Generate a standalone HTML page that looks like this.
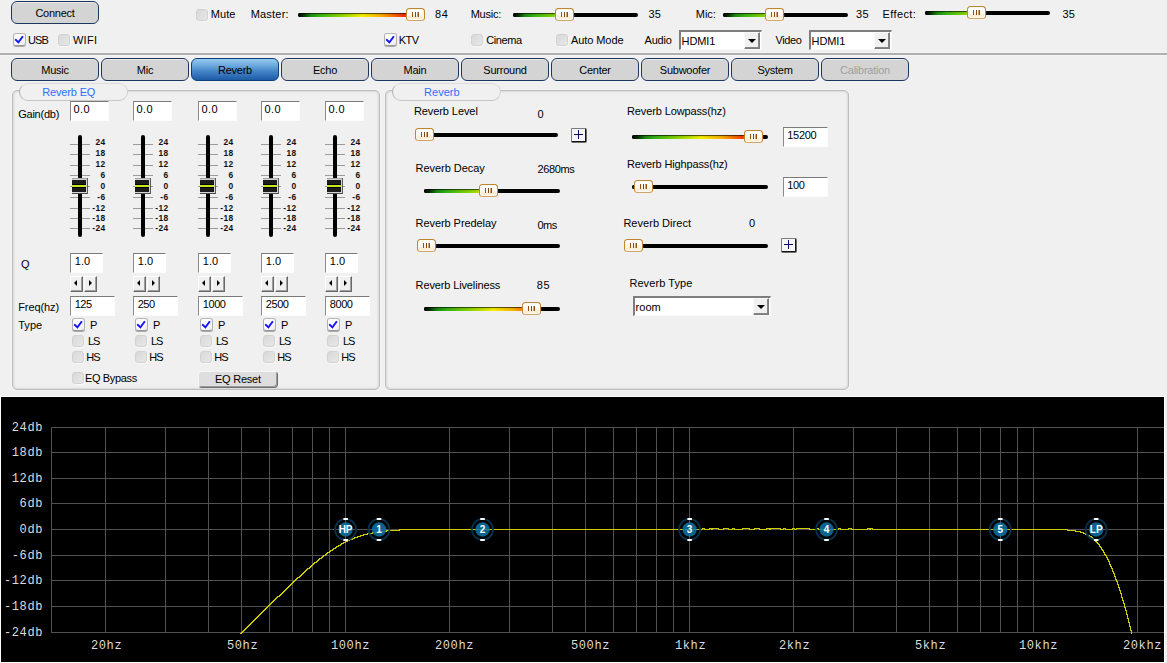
<!DOCTYPE html><html><head><meta charset="utf-8"><title>Reverb</title><style>
html,body{margin:0;padding:0;}
body{width:1167px;height:663px;overflow:hidden;background:#f0f0f0;position:relative;font-family:"Liberation Sans",sans-serif;font-size:11px;color:#000;}
.a{position:absolute;}
.t{position:absolute;white-space:nowrap;line-height:13px;height:13px;}
.btn{position:absolute;box-sizing:border-box;border:1px solid #1c3660;border-radius:6px;background:#d4d4d4;text-align:center;line-height:21px;padding-top:1px;height:23px;width:88px;letter-spacing:-.25px;box-shadow:inset 0 1px 0 #ebebeb,0 0 1px #fff;}
.btn.sel{background:linear-gradient(#94caef 0%,#6eaade 30%,#4283c6 60%,#1d5ba7 100%);border-color:#0e3f7c;box-shadow:0 0 1px #fff;}
.btn.dis{color:#a0a0a0;}
.cb{position:absolute;box-sizing:border-box;width:12px;height:12px;border:1px solid #d2d2d2;border-radius:3px;background:linear-gradient(135deg,#d9d9d9,#e7e7e7);box-shadow:1px 1px 0 #f8f8f8;}
.cb.on{width:13px;height:13px;border-color:#b4b4b4 #b0b0b0 #989898 #b0b0b0;background:linear-gradient(135deg,#ffffff 30%,#ececec);box-shadow:0 1px 0 #a8a8a8;}
.cb svg{position:absolute;left:0;top:0;}
.inp{position:absolute;box-sizing:border-box;background:#fff;border-top:1px solid #7a7a7a;border-left:1px solid #8a8a8a;border-right:1px solid #fdfdfd;border-bottom:1px solid #fdfdfd;line-height:15px;padding-left:4px;}
.sel2{position:absolute;box-sizing:border-box;background:#fff;border-style:solid;border-width:2px 1px 1px 2px;border-color:#7e7e7e #f8f8f8 #f8f8f8 #7e7e7e;line-height:19px;padding-left:1.5px;}
.sel2 i{position:absolute;right:1px;top:0;bottom:0;width:16px;box-sizing:border-box;background:#f0f0f0;border:1px solid;border-color:#fafafa #7c7c7c #7c7c7c #fafafa;box-shadow:inset -1px -1px 0 #868686;}

.sel2 i:after{content:"";position:absolute;left:3px;top:6px;border:4px solid transparent;border-top:4px solid #000;border-bottom:none;}
.trk{position:absolute;height:4px;border-radius:2px;background:#000;}
.hnd{position:absolute;box-sizing:border-box;width:19px;height:13px;border:1px solid #bf8430;border-bottom-color:#d2a566;border-radius:3.5px;background:linear-gradient(#ffffff 30%,#fbecd2 75%,#fdf3e2);box-shadow:inset 0 0 0 1px #fffaf2,0 0 1px #fafafa;}
.hnd:before{content:"";position:absolute;left:5px;top:3px;width:1.3px;height:5px;background:#96500f;box-shadow:3px 0 0 #8a440c,5.5px 0 0 #96500f,6px 0 0 #96500f;}
.grp{position:absolute;box-sizing:border-box;border:1px solid #bdbdbd;border-radius:5px;box-shadow:inset 0 0 3px rgba(0,0,0,.2),0 0 0 1px #f4f4f4;}
.pill{position:absolute;box-sizing:border-box;height:18px;border:1px solid;border-color:#dcdcdc #d4d4d4 #c6c6c6 #b4b4b4;border-radius:9px;background:#f0f0f0;}
.plus{position:absolute;box-sizing:border-box;width:15px;height:14px;background:#f6f6f9;border:1px solid;border-color:#7c7c7c #141414 #141414 #7c7c7c;border-radius:1.5px;box-shadow:.5px .5px 0 .5px rgba(0,0,0,.55);}
.plus:before{content:"";position:absolute;left:2px;top:5px;width:9px;height:1px;background:#0a0a64;}
.plus:after{content:"";position:absolute;left:6px;top:1px;width:1px;height:9px;background:#0a0a64;}
.sp{position:absolute;box-sizing:border-box;width:13px;height:16px;background:#f0f0f0;border:1px solid;border-color:#fff #696969 #696969 #fff;box-shadow:inset -1px -1px 0 #a0a0a0;}
.sp:after{content:"";position:absolute;top:3px;border:3px solid transparent;}
.sp.l:after{left:1px;border-right:3px solid #000;border-left:none;left:3px;}
.sp.r:after{left:4px;border-left:3px solid #000;border-right:none;}
.tick{position:absolute;height:1px;background:#9a9a9a;width:20px;}
.tl{position:absolute;font-size:8.4px;font-weight:bold;letter-spacing:.4px;line-height:10px;width:24.5px;text-align:right;color:#111;}
.vtrk{position:absolute;width:4px;border-radius:2px;background:#000;}
.vh{position:absolute;width:16px;height:16px;background:linear-gradient(to bottom,#a4a4a4 0,#a4a4a4 1px,#d4d4d4 1px,#d4d4d4 2px,#1c1c1c 2px,#1c1c1c 6px,#04040f 6px,#04040f 7px,#c4e81c 7px,#c4e81c 9px,#04040f 9px,#04040f 10px,#1c1c1c 10px,#1c1c1c 14px,#d4d4d4 14px,#d4d4d4 15px,#4a4a4a 15px,#4a4a4a 16px);}
.vh:before{content:"";position:absolute;left:14px;top:1px;width:1px;height:14px;background:#d4d4d4;}
.vh:after{content:"";position:absolute;left:15px;top:0;width:1px;height:16px;background:#5a5a5a;}
.rbtn{position:absolute;box-sizing:border-box;border:1px solid;border-color:#f6f6f6 #6e6e6e #6e6e6e #f6f6f6;border-radius:4px;background:#dedede;box-shadow:inset -1px -1px 0 #9c9c9c;}
</style></head><body>
<div class="btn" style="left:11px;top:1px">Connect</div>
<div class="cb on" style="left:13px;top:33px"><svg width="11" height="11" viewBox="0 0 11 11"><path d="M1.2 5.3 L4.4 8.4 L8.9 2.2" fill="none" stroke="#1414f4" stroke-width="1.9"/></svg></div>
<div class="t" style="left:28.1px;top:33.7px;letter-spacing:-0.97px;">USB</div>
<div class="cb" style="left:58px;top:34px"></div>
<div class="t" style="left:72.9px;top:33.7px;letter-spacing:0.35px;">WIFI</div>
<div class="cb" style="left:196px;top:9px"></div>
<div class="t" style="left:210.7px;top:7.7px;letter-spacing:0.11px;">Mute</div>
<div class="t" style="left:250.7px;top:7.7px;letter-spacing:0.20px;">Master:</div>
<div class="trk" style="left:298px;top:13px;width:126px;"></div>
<div class="trk" style="left:298px;top:13px;width:117px;background:linear-gradient(rgba(0,0,0,.62) 0,rgba(0,0,0,.62) 1px,rgba(0,0,0,.12) 1px,rgba(0,0,0,0) 3px),linear-gradient(90deg,#000 0%,#062c04 4%,#1c8c10 10%,#34b414 17%,#86d400 33%,#f6f200 51%,#fbb000 66%,#f85000 79%,#f00800 90%,#f00000 100%);background-size:126px 4px,126px 4px;border-radius:2px 0 0 2px"></div>
<div class="hnd" style="left:406px;top:8px"></div>
<div class="t" style="left:435.1px;top:7.7px;letter-spacing:0.58px;">84</div>
<div class="t" style="left:470.7px;top:7.7px;letter-spacing:-0.25px;">Music:</div>
<div class="trk" style="left:513px;top:13px;width:125px;"></div>
<div class="trk" style="left:513px;top:13px;width:51px;background:linear-gradient(rgba(0,0,0,.62) 0,rgba(0,0,0,.62) 1px,rgba(0,0,0,.12) 1px,rgba(0,0,0,0) 3px),linear-gradient(90deg,#000 0%,#062c04 4%,#1c8c10 10%,#34b414 17%,#86d400 33%,#f6f200 51%,#fbb000 66%,#f85000 79%,#f00800 90%,#f00000 100%);background-size:125px 4px,125px 4px;border-radius:2px 0 0 2px"></div>
<div class="hnd" style="left:555px;top:8px"></div>
<div class="t" style="left:648.4px;top:7.7px;letter-spacing:0.13px;">35</div>
<div class="t" style="left:695.8px;top:7.7px;letter-spacing:-0.07px;">Mic:</div>
<div class="trk" style="left:723px;top:13px;width:125px;"></div>
<div class="trk" style="left:723px;top:13px;width:51px;background:linear-gradient(rgba(0,0,0,.62) 0,rgba(0,0,0,.62) 1px,rgba(0,0,0,.12) 1px,rgba(0,0,0,0) 3px),linear-gradient(90deg,#000 0%,#062c04 4%,#1c8c10 10%,#34b414 17%,#86d400 33%,#f6f200 51%,#fbb000 66%,#f85000 79%,#f00800 90%,#f00000 100%);background-size:125px 4px,125px 4px;border-radius:2px 0 0 2px"></div>
<div class="hnd" style="left:765px;top:8px"></div>
<div class="t" style="left:856.0px;top:7.7px;letter-spacing:0.28px;">35</div>
<div class="t" style="left:882.6px;top:7.7px;letter-spacing:0.36px;">Effect:</div>
<div class="trk" style="left:925px;top:11px;width:125px;"></div>
<div class="trk" style="left:925px;top:11px;width:51px;background:linear-gradient(rgba(0,0,0,.62) 0,rgba(0,0,0,.62) 1px,rgba(0,0,0,.12) 1px,rgba(0,0,0,0) 3px),linear-gradient(90deg,#000 0%,#062c04 4%,#1c8c10 10%,#34b414 17%,#86d400 33%,#f6f200 51%,#fbb000 66%,#f85000 79%,#f00800 90%,#f00000 100%);background-size:125px 4px,125px 4px;border-radius:2px 0 0 2px"></div>
<div class="hnd" style="left:967px;top:6px"></div>
<div class="t" style="left:1062.6px;top:7.7px;letter-spacing:0.08px;">35</div>
<div class="cb on" style="left:384px;top:33px"><svg width="11" height="11" viewBox="0 0 11 11"><path d="M1.2 5.3 L4.4 8.4 L8.9 2.2" fill="none" stroke="#1414f4" stroke-width="1.9"/></svg></div>
<div class="t" style="left:398.8px;top:33.7px;letter-spacing:-0.60px;">KTV</div>
<div class="cb" style="left:471px;top:34px"></div>
<div class="t" style="left:486.2px;top:33.7px;letter-spacing:-0.38px;">Cinema</div>
<div class="cb" style="left:556px;top:34px"></div>
<div class="t" style="left:571.0px;top:33.7px;letter-spacing:-0.08px;">Auto Mode</div>
<div class="t" style="left:644.5px;top:33.7px;letter-spacing:-0.21px;">Audio</div>
<div class="sel2" style="left:679px;top:30px;width:83px;height:20px"><i></i></div>
<div class="t" style="left:681.6px;top:34.7px;letter-spacing:-0.13px;">HDMI1</div>
<div class="t" style="left:775.4px;top:33.7px;letter-spacing:-0.37px;">Video</div>
<div class="sel2" style="left:809px;top:30px;width:83px;height:20px"><i></i></div>
<div class="t" style="left:811.6px;top:34.7px;letter-spacing:-0.13px;">HDMI1</div>
<div class="a" style="left:0;top:53px;width:1167px;height:2px;background:#b0b0b0"></div>
<div class="a" style="left:0;top:52px;width:1167px;height:1px;background:#f4f4f4"></div>
<div class="a" style="left:0;top:55px;width:1167px;height:1px;background:#f5f5f5"></div>
<div class="btn" style="left:11px;top:58px">Music</div>
<div class="btn" style="left:101px;top:58px">Mic</div>
<div class="btn sel" style="left:191px;top:58px">Reverb</div>
<div class="btn" style="left:281px;top:58px">Echo</div>
<div class="btn" style="left:371px;top:58px">Main</div>
<div class="btn" style="left:461px;top:58px">Surround</div>
<div class="btn" style="left:551px;top:58px">Center</div>
<div class="btn" style="left:641px;top:58px">Subwoofer</div>
<div class="btn" style="left:731px;top:58px">System</div>
<div class="btn dis" style="left:821px;top:58px">Calibration</div>
<div class="grp" style="left:12px;top:90px;width:368px;height:300px"></div>
<div class="pill" style="left:19px;top:83px;width:109px"></div>
<div class="t" style="left:42.2px;top:85.7px;letter-spacing:-0.15px;color:#2f6fff;">Reverb EQ</div>
<div class="grp" style="left:385px;top:90px;width:464px;height:300px"></div>
<div class="pill" style="left:392px;top:83px;width:109px"></div>
<div class="t" style="left:424.1px;top:85.7px;letter-spacing:0.02px;color:#2f6fff;">Reverb</div>
<div class="t" style="left:18.2px;top:107.7px;letter-spacing:-0.24px;">Gain(db)</div>
<div class="t" style="left:21.1px;top:257.7px;letter-spacing:0.24px;">Q</div>
<div class="t" style="left:18.2px;top:300.7px;letter-spacing:-0.08px;">Freq(hz)</div>
<div class="t" style="left:18.2px;top:318.7px;letter-spacing:0.04px;">Type</div>
<div class="inp" style="left:70px;top:101px;width:39px;height:20px;"></div>
<div class="t" style="left:73.4px;top:102.7px;letter-spacing:0.50px;">0.0</div>
<div class="tick" style="left:70px;top:144px"></div>
<div class="tl" style="left:81px;top:137px">24</div>
<div class="tick" style="left:70px;top:154px"></div>
<div class="tl" style="left:81px;top:148px">18</div>
<div class="tick" style="left:70px;top:165px"></div>
<div class="tl" style="left:81px;top:159px">12</div>
<div class="tick" style="left:70px;top:175px"></div>
<div class="tl" style="left:81px;top:170px">6</div>
<div class="tick" style="left:70px;top:186px"></div>
<div class="tl" style="left:81px;top:181px">0</div>
<div class="tick" style="left:70px;top:197px"></div>
<div class="tl" style="left:81px;top:192px">-6</div>
<div class="tick" style="left:70px;top:208px"></div>
<div class="tl" style="left:81px;top:203px">-12</div>
<div class="tick" style="left:70px;top:218px"></div>
<div class="tl" style="left:81px;top:213px">-18</div>
<div class="tick" style="left:70px;top:228px"></div>
<div class="tl" style="left:81px;top:223px">-24</div>
<div class="vtrk" style="left:78px;top:135px;height:102px"></div>
<div class="vh" style="left:72px;top:178px"></div>
<div class="inp" style="left:70px;top:253px;width:33px;height:20px;"></div>
<div class="t" style="left:74.7px;top:254.7px;letter-spacing:0.07px;">1.0</div>
<div class="sp l" style="left:70px;top:276px"></div><div class="sp r" style="left:84px;top:276px"></div>
<div class="inp" style="left:70px;top:296px;width:45px;height:20px;"></div>
<div class="t" style="left:74.7px;top:297.7px;letter-spacing:-0.45px;">125</div>
<div class="cb on" style="left:72px;top:318px"><svg width="11" height="11" viewBox="0 0 11 11"><path d="M1.2 5.3 L4.4 8.4 L8.9 2.2" fill="none" stroke="#1414f4" stroke-width="1.9"/></svg></div>
<div class="t" style="left:89.9px;top:318.7px;letter-spacing:-0.74px;">P</div>
<div class="cb" style="left:72px;top:335px"></div>
<div class="t" style="left:87.9px;top:334.7px;letter-spacing:-0.98px;">LS</div>
<div class="cb" style="left:72px;top:351px"></div>
<div class="t" style="left:86.3px;top:350.7px;letter-spacing:-1.09px;">HS</div>
<div class="inp" style="left:133px;top:101px;width:39px;height:20px;"></div>
<div class="t" style="left:136.4px;top:102.7px;letter-spacing:0.50px;">0.0</div>
<div class="tick" style="left:133px;top:144px"></div>
<div class="tl" style="left:144px;top:137px">24</div>
<div class="tick" style="left:133px;top:154px"></div>
<div class="tl" style="left:144px;top:148px">18</div>
<div class="tick" style="left:133px;top:165px"></div>
<div class="tl" style="left:144px;top:159px">12</div>
<div class="tick" style="left:133px;top:175px"></div>
<div class="tl" style="left:144px;top:170px">6</div>
<div class="tick" style="left:133px;top:186px"></div>
<div class="tl" style="left:144px;top:181px">0</div>
<div class="tick" style="left:133px;top:197px"></div>
<div class="tl" style="left:144px;top:192px">-6</div>
<div class="tick" style="left:133px;top:208px"></div>
<div class="tl" style="left:144px;top:203px">-12</div>
<div class="tick" style="left:133px;top:218px"></div>
<div class="tl" style="left:144px;top:213px">-18</div>
<div class="tick" style="left:133px;top:228px"></div>
<div class="tl" style="left:144px;top:223px">-24</div>
<div class="vtrk" style="left:141px;top:135px;height:102px"></div>
<div class="vh" style="left:135px;top:178px"></div>
<div class="inp" style="left:133px;top:253px;width:33px;height:20px;"></div>
<div class="t" style="left:137.7px;top:254.7px;letter-spacing:0.07px;">1.0</div>
<div class="sp l" style="left:133px;top:276px"></div><div class="sp r" style="left:147px;top:276px"></div>
<div class="inp" style="left:133px;top:296px;width:45px;height:20px;"></div>
<div class="t" style="left:137.7px;top:297.7px;letter-spacing:-0.45px;">250</div>
<div class="cb on" style="left:135px;top:318px"><svg width="11" height="11" viewBox="0 0 11 11"><path d="M1.2 5.3 L4.4 8.4 L8.9 2.2" fill="none" stroke="#1414f4" stroke-width="1.9"/></svg></div>
<div class="t" style="left:152.9px;top:318.7px;letter-spacing:-0.74px;">P</div>
<div class="cb" style="left:135px;top:335px"></div>
<div class="t" style="left:150.9px;top:334.7px;letter-spacing:-0.98px;">LS</div>
<div class="cb" style="left:135px;top:351px"></div>
<div class="t" style="left:149.3px;top:350.7px;letter-spacing:-1.09px;">HS</div>
<div class="inp" style="left:198px;top:101px;width:39px;height:20px;"></div>
<div class="t" style="left:201.4px;top:102.7px;letter-spacing:0.50px;">0.0</div>
<div class="tick" style="left:198px;top:144px"></div>
<div class="tl" style="left:209px;top:137px">24</div>
<div class="tick" style="left:198px;top:154px"></div>
<div class="tl" style="left:209px;top:148px">18</div>
<div class="tick" style="left:198px;top:165px"></div>
<div class="tl" style="left:209px;top:159px">12</div>
<div class="tick" style="left:198px;top:175px"></div>
<div class="tl" style="left:209px;top:170px">6</div>
<div class="tick" style="left:198px;top:186px"></div>
<div class="tl" style="left:209px;top:181px">0</div>
<div class="tick" style="left:198px;top:197px"></div>
<div class="tl" style="left:209px;top:192px">-6</div>
<div class="tick" style="left:198px;top:208px"></div>
<div class="tl" style="left:209px;top:203px">-12</div>
<div class="tick" style="left:198px;top:218px"></div>
<div class="tl" style="left:209px;top:213px">-18</div>
<div class="tick" style="left:198px;top:228px"></div>
<div class="tl" style="left:209px;top:223px">-24</div>
<div class="vtrk" style="left:206px;top:135px;height:102px"></div>
<div class="vh" style="left:200px;top:178px"></div>
<div class="inp" style="left:198px;top:253px;width:33px;height:20px;"></div>
<div class="t" style="left:202.7px;top:254.7px;letter-spacing:0.07px;">1.0</div>
<div class="sp l" style="left:198px;top:276px"></div><div class="sp r" style="left:212px;top:276px"></div>
<div class="inp" style="left:198px;top:296px;width:45px;height:20px;"></div>
<div class="t" style="left:202.7px;top:297.7px;letter-spacing:-0.39px;">1000</div>
<div class="cb on" style="left:200px;top:318px"><svg width="11" height="11" viewBox="0 0 11 11"><path d="M1.2 5.3 L4.4 8.4 L8.9 2.2" fill="none" stroke="#1414f4" stroke-width="1.9"/></svg></div>
<div class="t" style="left:217.9px;top:318.7px;letter-spacing:-0.74px;">P</div>
<div class="cb" style="left:200px;top:335px"></div>
<div class="t" style="left:215.9px;top:334.7px;letter-spacing:-0.98px;">LS</div>
<div class="cb" style="left:200px;top:351px"></div>
<div class="t" style="left:214.3px;top:350.7px;letter-spacing:-1.09px;">HS</div>
<div class="inp" style="left:261px;top:101px;width:39px;height:20px;"></div>
<div class="t" style="left:264.4px;top:102.7px;letter-spacing:0.50px;">0.0</div>
<div class="tick" style="left:261px;top:144px"></div>
<div class="tl" style="left:272px;top:137px">24</div>
<div class="tick" style="left:261px;top:154px"></div>
<div class="tl" style="left:272px;top:148px">18</div>
<div class="tick" style="left:261px;top:165px"></div>
<div class="tl" style="left:272px;top:159px">12</div>
<div class="tick" style="left:261px;top:175px"></div>
<div class="tl" style="left:272px;top:170px">6</div>
<div class="tick" style="left:261px;top:186px"></div>
<div class="tl" style="left:272px;top:181px">0</div>
<div class="tick" style="left:261px;top:197px"></div>
<div class="tl" style="left:272px;top:192px">-6</div>
<div class="tick" style="left:261px;top:208px"></div>
<div class="tl" style="left:272px;top:203px">-12</div>
<div class="tick" style="left:261px;top:218px"></div>
<div class="tl" style="left:272px;top:213px">-18</div>
<div class="tick" style="left:261px;top:228px"></div>
<div class="tl" style="left:272px;top:223px">-24</div>
<div class="vtrk" style="left:269px;top:135px;height:102px"></div>
<div class="vh" style="left:263px;top:178px"></div>
<div class="inp" style="left:261px;top:253px;width:33px;height:20px;"></div>
<div class="t" style="left:265.7px;top:254.7px;letter-spacing:0.07px;">1.0</div>
<div class="sp l" style="left:261px;top:276px"></div><div class="sp r" style="left:275px;top:276px"></div>
<div class="inp" style="left:261px;top:296px;width:45px;height:20px;"></div>
<div class="t" style="left:265.7px;top:297.7px;letter-spacing:-0.39px;">2500</div>
<div class="cb on" style="left:263px;top:318px"><svg width="11" height="11" viewBox="0 0 11 11"><path d="M1.2 5.3 L4.4 8.4 L8.9 2.2" fill="none" stroke="#1414f4" stroke-width="1.9"/></svg></div>
<div class="t" style="left:280.9px;top:318.7px;letter-spacing:-0.74px;">P</div>
<div class="cb" style="left:263px;top:335px"></div>
<div class="t" style="left:278.9px;top:334.7px;letter-spacing:-0.98px;">LS</div>
<div class="cb" style="left:263px;top:351px"></div>
<div class="t" style="left:277.3px;top:350.7px;letter-spacing:-1.09px;">HS</div>
<div class="inp" style="left:325px;top:101px;width:39px;height:20px;"></div>
<div class="t" style="left:328.4px;top:102.7px;letter-spacing:0.50px;">0.0</div>
<div class="tick" style="left:325px;top:144px"></div>
<div class="tl" style="left:336px;top:137px">24</div>
<div class="tick" style="left:325px;top:154px"></div>
<div class="tl" style="left:336px;top:148px">18</div>
<div class="tick" style="left:325px;top:165px"></div>
<div class="tl" style="left:336px;top:159px">12</div>
<div class="tick" style="left:325px;top:175px"></div>
<div class="tl" style="left:336px;top:170px">6</div>
<div class="tick" style="left:325px;top:186px"></div>
<div class="tl" style="left:336px;top:181px">0</div>
<div class="tick" style="left:325px;top:197px"></div>
<div class="tl" style="left:336px;top:192px">-6</div>
<div class="tick" style="left:325px;top:208px"></div>
<div class="tl" style="left:336px;top:203px">-12</div>
<div class="tick" style="left:325px;top:218px"></div>
<div class="tl" style="left:336px;top:213px">-18</div>
<div class="tick" style="left:325px;top:228px"></div>
<div class="tl" style="left:336px;top:223px">-24</div>
<div class="vtrk" style="left:333px;top:135px;height:102px"></div>
<div class="vh" style="left:327px;top:178px"></div>
<div class="inp" style="left:325px;top:253px;width:33px;height:20px;"></div>
<div class="t" style="left:329.7px;top:254.7px;letter-spacing:0.07px;">1.0</div>
<div class="sp l" style="left:325px;top:276px"></div><div class="sp r" style="left:339px;top:276px"></div>
<div class="inp" style="left:325px;top:296px;width:45px;height:20px;"></div>
<div class="t" style="left:329.7px;top:297.7px;letter-spacing:-0.39px;">8000</div>
<div class="cb on" style="left:327px;top:318px"><svg width="11" height="11" viewBox="0 0 11 11"><path d="M1.2 5.3 L4.4 8.4 L8.9 2.2" fill="none" stroke="#1414f4" stroke-width="1.9"/></svg></div>
<div class="t" style="left:344.9px;top:318.7px;letter-spacing:-0.74px;">P</div>
<div class="cb" style="left:327px;top:335px"></div>
<div class="t" style="left:342.9px;top:334.7px;letter-spacing:-0.98px;">LS</div>
<div class="cb" style="left:327px;top:351px"></div>
<div class="t" style="left:341.3px;top:350.7px;letter-spacing:-1.09px;">HS</div>
<div class="cb" style="left:72px;top:372px"></div>
<div class="t" style="left:85.0px;top:371.7px;letter-spacing:-0.36px;">EQ Bypass</div>
<div class="rbtn" style="left:198px;top:371px;width:80px;height:17px;"></div>
<div class="t" style="left:214.9px;top:372.7px;letter-spacing:-0.22px;">EQ Reset</div>
<div class="t" style="left:413.9px;top:104.7px;letter-spacing:-0.08px;">Reverb Level</div>
<div class="t" style="left:537.4px;top:107.7px;letter-spacing:0.48px;">0</div>
<div class="trk" style="left:416px;top:133px;width:142px;"></div>
<div class="trk" style="left:416px;top:133px;width:8px;background:linear-gradient(rgba(0,0,0,.62) 0,rgba(0,0,0,.62) 1px,rgba(0,0,0,.12) 1px,rgba(0,0,0,0) 3px),linear-gradient(90deg,#000 0%,#062c04 4%,#1c8c10 10%,#34b414 17%,#86d400 33%,#f6f200 51%,#fbb000 66%,#f85000 79%,#f00800 90%,#f00000 100%);background-size:142px 4px,142px 4px;border-radius:2px 0 0 2px"></div>
<div class="hnd" style="left:415px;top:128px"></div>
<div class="plus" style="left:571px;top:128px"></div>
<div class="t" style="left:415.6px;top:161.7px;letter-spacing:-0.04px;">Reverb Decay</div>
<div class="t" style="left:537.4px;top:162.7px;letter-spacing:-0.34px;">2680ms</div>
<div class="trk" style="left:424px;top:189px;width:136px;"></div>
<div class="trk" style="left:424px;top:189px;width:64px;background:linear-gradient(rgba(0,0,0,.62) 0,rgba(0,0,0,.62) 1px,rgba(0,0,0,.12) 1px,rgba(0,0,0,0) 3px),linear-gradient(90deg,#000 0%,#062c04 4%,#1c8c10 10%,#34b414 17%,#86d400 33%,#f6f200 51%,#fbb000 66%,#f85000 79%,#f00800 90%,#f00000 100%);background-size:136px 4px,136px 4px;border-radius:2px 0 0 2px"></div>
<div class="hnd" style="left:479px;top:184px"></div>
<div class="t" style="left:415.6px;top:216.7px;letter-spacing:-0.07px;">Reverb Predelay</div>
<div class="t" style="left:537.6px;top:218.7px;letter-spacing:-0.59px;">0ms</div>
<div class="trk" style="left:418px;top:244px;width:142px;"></div>
<div class="trk" style="left:418px;top:244px;width:8px;background:linear-gradient(rgba(0,0,0,.62) 0,rgba(0,0,0,.62) 1px,rgba(0,0,0,.12) 1px,rgba(0,0,0,0) 3px),linear-gradient(90deg,#000 0%,#062c04 4%,#1c8c10 10%,#34b414 17%,#86d400 33%,#f6f200 51%,#fbb000 66%,#f85000 79%,#f00800 90%,#f00000 100%);background-size:142px 4px,142px 4px;border-radius:2px 0 0 2px"></div>
<div class="hnd" style="left:417px;top:239px"></div>
<div class="t" style="left:415.6px;top:278.7px;letter-spacing:-0.13px;">Reverb Liveliness</div>
<div class="t" style="left:536.8px;top:278.7px;letter-spacing:0.53px;">85</div>
<div class="trk" style="left:424px;top:307px;width:136px;"></div>
<div class="trk" style="left:424px;top:307px;width:107px;background:linear-gradient(rgba(0,0,0,.62) 0,rgba(0,0,0,.62) 1px,rgba(0,0,0,.12) 1px,rgba(0,0,0,0) 3px),linear-gradient(90deg,#000 0%,#062c04 4%,#1c8c10 10%,#34b414 17%,#86d400 33%,#f6f200 51%,#fbb000 66%,#f85000 79%,#f00800 90%,#f00000 100%);background-size:136px 4px,136px 4px;border-radius:2px 0 0 2px"></div>
<div class="hnd" style="left:522px;top:302px"></div>
<div class="t" style="left:627.0px;top:104.7px;letter-spacing:-0.12px;">Reverb Lowpass(hz)</div>
<div class="trk" style="left:632px;top:135px;width:136px;"></div>
<div class="trk" style="left:632px;top:135px;width:121px;background:linear-gradient(rgba(0,0,0,.62) 0,rgba(0,0,0,.62) 1px,rgba(0,0,0,.12) 1px,rgba(0,0,0,0) 3px),linear-gradient(90deg,#000 0%,#062c04 4%,#1c8c10 10%,#34b414 17%,#86d400 33%,#f6f200 51%,#fbb000 66%,#f85000 79%,#f00800 90%,#f00000 100%);background-size:136px 4px,136px 4px;border-radius:2px 0 0 2px"></div>
<div class="hnd" style="left:744px;top:130px"></div>
<div class="inp" style="left:783px;top:127px;width:45px;height:20px;"></div>
<div class="t" style="left:787.2px;top:128.7px;letter-spacing:-0.26px;">15200</div>
<div class="t" style="left:626.9px;top:157.7px;letter-spacing:-0.14px;">Reverb Highpass(hz)</div>
<div class="trk" style="left:632px;top:185px;width:136px;"></div>
<div class="trk" style="left:632px;top:185px;width:11px;background:linear-gradient(rgba(0,0,0,.62) 0,rgba(0,0,0,.62) 1px,rgba(0,0,0,.12) 1px,rgba(0,0,0,0) 3px),linear-gradient(90deg,#000 0%,#062c04 4%,#1c8c10 10%,#34b414 17%,#86d400 33%,#f6f200 51%,#fbb000 66%,#f85000 79%,#f00800 90%,#f00000 100%);background-size:136px 4px,136px 4px;border-radius:2px 0 0 2px"></div>
<div class="hnd" style="left:634px;top:180px"></div>
<div class="inp" style="left:783px;top:177px;width:45px;height:20px;"></div>
<div class="t" style="left:787.2px;top:178.7px;letter-spacing:-0.35px;">100</div>
<div class="t" style="left:623.4px;top:216.7px;letter-spacing:0.03px;">Reverb Direct</div>
<div class="t" style="left:749.1px;top:216.7px;letter-spacing:0.48px;">0</div>
<div class="trk" style="left:626px;top:244px;width:142px;"></div>
<div class="trk" style="left:626px;top:244px;width:7px;background:linear-gradient(rgba(0,0,0,.62) 0,rgba(0,0,0,.62) 1px,rgba(0,0,0,.12) 1px,rgba(0,0,0,0) 3px),linear-gradient(90deg,#000 0%,#062c04 4%,#1c8c10 10%,#34b414 17%,#86d400 33%,#f6f200 51%,#fbb000 66%,#f85000 79%,#f00800 90%,#f00000 100%);background-size:142px 4px,142px 4px;border-radius:2px 0 0 2px"></div>
<div class="hnd" style="left:624px;top:239px"></div>
<div class="plus" style="left:781px;top:238px"></div>
<div class="t" style="left:629.4px;top:276.7px;letter-spacing:0.08px;">Reverb Type</div>
<div class="sel2" style="left:633px;top:296px;width:138px;height:20px;"></div>
<div class="sel2" style="left:633px;top:296px;width:138px;height:20px;"><i></i></div>
<div class="t" style="left:635.6px;top:300.7px;letter-spacing:0.03px;">room</div>
<div class="a" style="left:0;top:396px;width:1165px;height:267px;background:#fff"></div>
<svg class="a" style="left:1px;top:397px" width="1163" height="265" viewBox="1 397 1163 265">
<rect x="1" y="397" width="1163" height="265" fill="#000"/>
<g fill="#515151" shape-rendering="crispEdges">
<rect x="51" y="427" width="1113" height="1"/>
<rect x="51" y="452" width="1113" height="1"/>
<rect x="51" y="478" width="1113" height="1"/>
<rect x="51" y="503" width="1113" height="1"/>
<rect x="51" y="529" width="1113" height="1"/>
<rect x="51" y="555" width="1113" height="1"/>
<rect x="51" y="580" width="1113" height="1"/>
<rect x="51" y="606" width="1113" height="1"/>
<rect x="51" y="632" width="1113" height="1"/>
<rect x="51" y="427" width="1" height="206"/>
<rect x="105" y="427" width="1" height="206"/>
<rect x="165" y="427" width="1" height="206"/>
<rect x="208" y="427" width="1" height="206"/>
<rect x="241" y="427" width="1" height="206"/>
<rect x="269" y="427" width="1" height="206"/>
<rect x="292" y="427" width="1" height="206"/>
<rect x="312" y="427" width="1" height="206"/>
<rect x="329" y="427" width="1" height="206"/>
<rect x="345" y="427" width="1" height="206"/>
<rect x="449" y="427" width="1" height="206"/>
<rect x="509" y="427" width="1" height="206"/>
<rect x="552" y="427" width="1" height="206"/>
<rect x="585" y="427" width="1" height="206"/>
<rect x="613" y="427" width="1" height="206"/>
<rect x="636" y="427" width="1" height="206"/>
<rect x="656" y="427" width="1" height="206"/>
<rect x="673" y="427" width="1" height="206"/>
<rect x="689" y="427" width="1" height="206"/>
<rect x="793" y="427" width="1" height="206"/>
<rect x="853" y="427" width="1" height="206"/>
<rect x="896" y="427" width="1" height="206"/>
<rect x="929" y="427" width="1" height="206"/>
<rect x="957" y="427" width="1" height="206"/>
<rect x="980" y="427" width="1" height="206"/>
<rect x="1000" y="427" width="1" height="206"/>
<rect x="1017" y="427" width="1" height="206"/>
<rect x="1033" y="427" width="1" height="206"/>
<rect x="1137" y="427" width="1" height="206"/>
</g>
<g font-family="'Liberation Mono',monospace" font-size="12" letter-spacing="0.6" fill="#dcdcdc">
<text x="11.8" y="431">24db</text>
<text x="11.8" y="456">18db</text>
<text x="11.8" y="482">12db</text>
<text x="19.6" y="507">6db</text>
<text x="19.6" y="533">0db</text>
<text x="11.8" y="559">-6db</text>
<text x="4.0" y="584">-12db</text>
<text x="4.0" y="610">-18db</text>
<text x="4.0" y="636">-24db</text>
<text x="91" y="649">20hz</text>
<text x="227" y="649">50hz</text>
<text x="331" y="649">100hz</text>
<text x="435" y="649">200hz</text>
<text x="571" y="649">500hz</text>
<text x="675" y="649">1khz</text>
<text x="779" y="649">2khz</text>
<text x="915" y="649">5khz</text>
<text x="1019" y="649">10khz</text>
<text x="1123" y="649">20khz</text>
</g>
<path d="M240 633h1v1h-1zM241 632h1v2h-1zM242 631h1v2h-1zM243 630h1v2h-1zM244 629h1v2h-1zM245 628h1v2h-1zM246 627h1v2h-1zM247 626h1v2h-1zM248 625h1v2h-1zM249 624h1v2h-1zM250 623h1v2h-1zM251 622h1v2h-1zM252 621h1v2h-1zM253 620h1v2h-1zM254 619h1v2h-1zM255 618h1v2h-1zM256 617h1v2h-1zM257 616h1v2h-1zM258 615h1v2h-1zM259 614h1v2h-1zM260 613h1v2h-1zM261 612h1v2h-1zM262 611h1v2h-1zM263 610h1v2h-1zM264 609h1v2h-1zM265 608h1v2h-1zM266 607h1v2h-1zM267 606h1v2h-1zM268 605h1v2h-1zM269 604h1v2h-1zM270 603h1v2h-1zM271 602h1v2h-1zM272 601h1v2h-1zM273 600h1v2h-1zM274 599h1v2h-1zM275 598h1v2h-1zM276 597h1v2h-1zM277 596h1v2h-1zM278 596h1v1h-1zM279 595h1v2h-1zM280 594h1v2h-1zM281 593h1v2h-1zM282 592h1v2h-1zM283 591h1v2h-1zM284 590h1v2h-1zM285 589h1v2h-1zM286 588h1v2h-1zM287 587h1v2h-1zM288 586h1v2h-1zM289 585h1v2h-1zM290 584h1v2h-1zM291 583h1v2h-1zM292 582h1v2h-1zM293 581h1v2h-1zM294 580h1v2h-1zM295 579h1v2h-1zM296 578h1v2h-1zM297 577h1v2h-1zM298 577h1v1h-1zM299 576h1v2h-1zM300 575h1v2h-1zM301 574h1v2h-1zM302 573h1v2h-1zM303 572h1v2h-1zM304 571h1v2h-1zM305 570h1v2h-1zM306 569h1v2h-1zM307 568h1v2h-1zM308 568h1v1h-1zM309 567h1v2h-1zM310 566h1v2h-1zM311 565h1v2h-1zM312 564h1v2h-1zM313 563h1v2h-1zM314 562h1v2h-1zM315 562h1v1h-1zM316 561h1v2h-1zM317 560h1v2h-1zM318 559h1v2h-1zM319 558h1v2h-1zM320 558h1v1h-1zM321 557h1v2h-1zM322 556h1v2h-1zM323 555h1v2h-1zM324 555h1v1h-1zM325 554h1v2h-1zM326 553h1v2h-1zM327 552h1v2h-1zM328 552h1v1h-1zM329 551h1v2h-1zM330 550h1v2h-1zM331 550h1v1h-1zM332 549h1v2h-1zM333 548h1v2h-1zM334 548h1v1h-1zM335 547h1v2h-1zM336 546h1v2h-1zM337 546h1v1h-1zM338 545h1v2h-1zM339 545h1v1h-1zM340 544h1v2h-1zM341 543h1v2h-1zM342 543h1v1h-1zM343 542h1v2h-1zM344 542h1v1h-1zM345 541h1v2h-1zM346 541h1v1h-1zM347 540h1v2h-1zM348 540h1v1h-1zM349 539h1v2h-1zM350 539h2v1h-2zM352 538h1v2h-1zM353 538h1v1h-1zM354 537h1v2h-1zM355 537h2v1h-2zM357 536h1v2h-1zM358 536h2v1h-2zM360 535h1v2h-1zM361 535h2v1h-2zM363 534h1v2h-1zM364 534h3v1h-3zM367 533h1v2h-1zM368 533h4v1h-4zM372 532h1v2h-1zM373 532h5v1h-5zM378 531h1v2h-1zM379 531h7v1h-7zM386 530h1v2h-1zM387 530h12v1h-12zM399 529h1v2h-1zM400 529h302v1h-302zM702 528h1v2h-1zM703 528h1v1h-1zM704 528h1v2h-1zM705 529h4v1h-4zM709 528h1v2h-1zM710 528h1v1h-1zM711 528h1v2h-1zM712 528h1v2h-1zM713 528h5v1h-5zM718 528h1v2h-1zM719 529h4v1h-4zM723 528h1v2h-1zM724 528h4v1h-4zM728 528h1v2h-1zM729 529h3v1h-3zM732 528h1v2h-1zM733 528h1v1h-1zM734 528h1v2h-1zM735 529h7v1h-7zM742 528h1v2h-1zM743 528h6v1h-6zM749 528h1v2h-1zM750 529h4v1h-4zM754 528h1v2h-1zM755 528h4v1h-4zM759 528h1v2h-1zM760 529h6v1h-6zM766 528h1v2h-1zM767 528h2v1h-2zM769 528h1v2h-1zM770 528h1v2h-1zM771 528h9v1h-9zM780 528h1v2h-1zM781 529h2v1h-2zM783 528h1v2h-1zM784 528h1v1h-1zM785 528h1v2h-1zM786 529h6v1h-6zM792 528h1v2h-1zM793 528h1v1h-1zM794 528h1v2h-1zM795 529h1v1h-1zM796 528h1v2h-1zM797 528h12v1h-12zM809 528h1v2h-1zM810 529h6v1h-6zM816 528h1v2h-1zM817 528h1v1h-1zM818 528h1v2h-1zM819 529h19v1h-19zM838 528h1v2h-1zM839 528h1v1h-1zM840 528h1v2h-1zM841 529h7v1h-7zM848 528h1v2h-1zM849 528h2v1h-2zM851 528h1v2h-1zM852 529h15v1h-15zM867 528h1v2h-1zM868 528h1v1h-1zM869 528h1v2h-1zM870 528h1v2h-1zM871 528h1v1h-1zM872 528h1v2h-1zM873 529h194v1h-194zM1067 529h1v2h-1zM1068 530h7v1h-7zM1075 530h1v2h-1zM1076 531h4v1h-4zM1080 531h1v2h-1zM1081 532h2v1h-2zM1083 532h1v2h-1zM1084 533h1v1h-1zM1085 533h1v2h-1zM1086 534h1v1h-1zM1087 534h1v2h-1zM1088 535h1v1h-1zM1089 535h1v2h-1zM1090 536h1v1h-1zM1091 536h1v2h-1zM1092 537h1v2h-1zM1093 538h1v2h-1zM1094 539h1v2h-1zM1095 540h1v2h-1zM1096 541h1v2h-1zM1097 542h1v2h-1zM1098 543h1v2h-1zM1099 544h1v3h-1zM1100 546h1v2h-1zM1101 547h1v3h-1zM1102 549h1v2h-1zM1103 550h1v3h-1zM1104 552h1v3h-1zM1105 554h1v2h-1zM1106 555h1v3h-1zM1107 557h1v3h-1zM1108 559h1v3h-1zM1109 561h1v4h-1zM1110 564h1v3h-1zM1111 566h1v3h-1zM1112 568h1v4h-1zM1113 571h1v3h-1zM1114 573h1v4h-1zM1115 576h1v4h-1zM1116 579h1v3h-1zM1117 581h1v4h-1zM1118 584h1v4h-1zM1119 587h1v4h-1zM1120 590h1v4h-1zM1121 593h1v5h-1zM1122 597h1v4h-1zM1123 600h1v4h-1zM1124 603h1v5h-1zM1125 607h1v4h-1zM1126 610h1v5h-1zM1127 614h1v5h-1zM1128 618h1v5h-1zM1129 622h1v5h-1zM1130 626h1v5h-1zM1131 630h1v4h-1z" fill="#cccc00" shape-rendering="crispEdges"/>
<g><circle cx="345.6" cy="529.5" r="10.5" fill="none" stroke="#08324c" stroke-width="1.7"/><circle cx="345.6" cy="529.5" r="7.2" fill="#0d76aa" fill-opacity="0.84"/><rect x="343.1" y="518.0" width="5" height="2" rx="1" fill="#fff"/><rect x="343.1" y="539.0" width="5" height="2" rx="1" fill="#fff"/><text x="345.6" y="533.1" text-anchor="middle" font-family="'Liberation Sans',sans-serif" font-weight="bold" font-size="10" fill="#fff">HP</text></g>
<g><circle cx="379.0" cy="529.5" r="10.5" fill="none" stroke="#08324c" stroke-width="1.7"/><circle cx="379.0" cy="529.5" r="7.2" fill="#0d76aa" fill-opacity="0.84"/><rect x="376.5" y="518.0" width="5" height="2" rx="1" fill="#fff"/><rect x="376.5" y="539.0" width="5" height="2" rx="1" fill="#fff"/><text x="379.0" y="533.1" text-anchor="middle" font-family="'Liberation Sans',sans-serif" font-weight="bold" font-size="10" fill="#fff">1</text></g>
<g><circle cx="482.5" cy="529.5" r="10.5" fill="none" stroke="#08324c" stroke-width="1.7"/><circle cx="482.5" cy="529.5" r="7.2" fill="#0d76aa" fill-opacity="0.84"/><rect x="480.0" y="518.0" width="5" height="2" rx="1" fill="#fff"/><rect x="480.0" y="539.0" width="5" height="2" rx="1" fill="#fff"/><text x="482.5" y="533.1" text-anchor="middle" font-family="'Liberation Sans',sans-serif" font-weight="bold" font-size="10" fill="#fff">2</text></g>
<g><circle cx="689.6" cy="529.5" r="10.5" fill="none" stroke="#08324c" stroke-width="1.7"/><circle cx="689.6" cy="529.5" r="7.2" fill="#0d76aa" fill-opacity="0.84"/><rect x="687.1" y="518.0" width="5" height="2" rx="1" fill="#fff"/><rect x="687.1" y="539.0" width="5" height="2" rx="1" fill="#fff"/><text x="689.6" y="533.1" text-anchor="middle" font-family="'Liberation Sans',sans-serif" font-weight="bold" font-size="10" fill="#fff">3</text></g>
<g><circle cx="826.5" cy="529.5" r="10.5" fill="none" stroke="#08324c" stroke-width="1.7"/><circle cx="826.5" cy="529.5" r="7.2" fill="#0d76aa" fill-opacity="0.84"/><rect x="824.0" y="518.0" width="5" height="2" rx="1" fill="#fff"/><rect x="824.0" y="539.0" width="5" height="2" rx="1" fill="#fff"/><text x="826.5" y="533.1" text-anchor="middle" font-family="'Liberation Sans',sans-serif" font-weight="bold" font-size="10" fill="#fff">4</text></g>
<g><circle cx="1000.3" cy="529.5" r="10.5" fill="none" stroke="#08324c" stroke-width="1.7"/><circle cx="1000.3" cy="529.5" r="7.2" fill="#0d76aa" fill-opacity="0.84"/><rect x="997.8" y="518.0" width="5" height="2" rx="1" fill="#fff"/><rect x="997.8" y="539.0" width="5" height="2" rx="1" fill="#fff"/><text x="1000.3" y="533.1" text-anchor="middle" font-family="'Liberation Sans',sans-serif" font-weight="bold" font-size="10" fill="#fff">5</text></g>
<g><circle cx="1096.2" cy="529.5" r="10.5" fill="none" stroke="#08324c" stroke-width="1.7"/><circle cx="1096.2" cy="529.5" r="7.2" fill="#0d76aa" fill-opacity="0.84"/><rect x="1093.7" y="518.0" width="5" height="2" rx="1" fill="#fff"/><rect x="1093.7" y="539.0" width="5" height="2" rx="1" fill="#fff"/><text x="1096.2" y="533.1" text-anchor="middle" font-family="'Liberation Sans',sans-serif" font-weight="bold" font-size="10" fill="#fff">LP</text></g>
</svg>
</body></html>
